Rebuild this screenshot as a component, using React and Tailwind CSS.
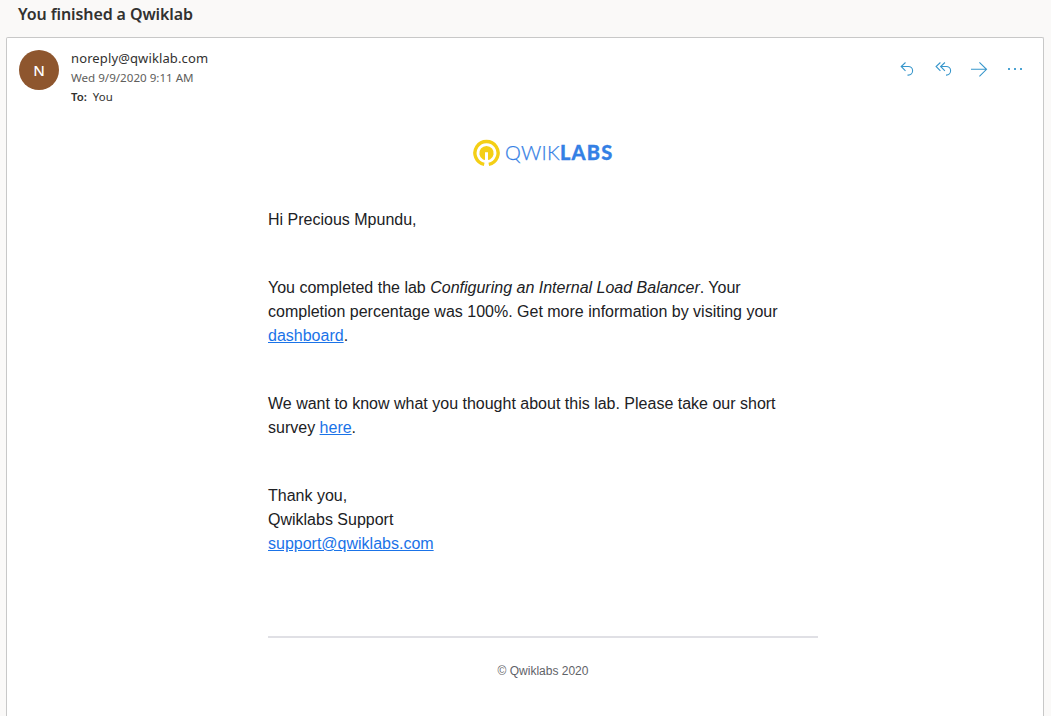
import React from 'react';

function ReplyIcon() {
  return (
    <svg width="16" height="16" viewBox="0 0 16 16" fill="none" stroke="#3796cb" strokeWidth="1.1">
      <path d="M6.5 1.5 2.2 5.5 6.5 9.8M2.2 5.5h7.1a4.3 4.3 0 0 1 0 8.6H8.5" />
    </svg>
  );
}

function ReplyAllIcon() {
  return (
    <svg width="18" height="16" viewBox="0 0 18 16" fill="none" stroke="#3796cb" strokeWidth="1.1">
      <path d="M6.4 1.5 2.1 5.5l4.3 4.3M10.9 1.5 6.6 5.5l4.3 4.3M6.6 5.5h5.7a4.3 4.3 0 0 1 0 8.6H12" />
    </svg>
  );
}

function ForwardIcon() {
  return (
    <svg width="18" height="16" viewBox="0 0 18 16" fill="none" stroke="#3796cb" strokeWidth="1.1">
      <path d="M1 8.3h15.6M9.4 1.3l7.1 7-7.1 7" />
    </svg>
  );
}

function MoreIcon() {
  return (
    <svg width="16" height="16" viewBox="0 0 16 16" fill="#4ba3d3">
      <path d="M1 7h2v2H1zM7 7h2v2H7zM13 7h2v2h-2z" />
    </svg>
  );
}

function Logo() {
  return (
    <div className="flex h-7 w-[142px] items-center">
      <svg className="shrink-0" width="28" height="28" viewBox="0 0 28 28" fill="none">
        <path d="M12.2 25.4A11.6 11.6 0 1 1 16.8 25.4" stroke="#f4cf15" strokeWidth="3.4" />
        <path d="M11 20.4A7.2 7.2 0 1 1 18 20.4L16 21V13.3H13V21Z" fill="#f4cf15" />
      </svg>
      <div className="-mt-[3px] ml-[5px] flex whitespace-nowrap font-['Lato'] text-[20px] leading-7 text-[#3480e5]">
        <span className="font-light tracking-[0.25px] [-webkit-text-stroke:0.25px_#3480e5]">QWIK</span>
        <span className="font-black tracking-[1.2px] [-webkit-text-stroke:0.3px_#3480e5]">LABS</span>
      </div>
    </div>
  );
}

const link = 'text-[#1a73e8] underline';

export default function App() {
  return (
    <div className="flex h-[716px] w-[1051px] flex-col overflow-hidden bg-[#faf9f8] font-['Noto_Sans',sans-serif] text-[#323130]">
      <h1 className="h-[37px] shrink-0 pl-[18px] text-[16px] font-semibold leading-[28px]">
        <span className="tracking-[-0.1px]">You finished a Qwiklab</span>
      </h1>
      <main className="ml-[6px] mr-[7px] flex-1 rounded-t-[2px] border border-b-0 border-[#c8c8c8] bg-white">
        <header className="flex h-[92px] pl-3 pt-3">
          <div className="flex size-10 items-center justify-center rounded-full bg-[#8e562e] pt-px text-[15px] font-medium text-white">
            N
          </div>
          <div className="ml-3 flex-1">
            <div className="h-[18px] text-[13px] leading-[17px] tracking-[0.12px]">
              <span>noreply@qwiklab.com</span>
            </div>
            <div className="h-5 text-[11.6px] leading-5 text-[#605e5c]">
              <span>Wed 9/9/2020 9:11 AM</span>
            </div>
            <div className="flex gap-[6px] text-[11.4px] leading-[18px]">
              <span className="font-semibold">To:</span>
              <span>You</span>
            </div>
          </div>
          <div className="mr-5 flex h-[38px] w-[124px] items-center justify-between">
            <ReplyIcon />
            <ReplyAllIcon />
            <ForwardIcon />
            <MoreIcon />
          </div>
        </header>
        <article className="ml-[261px] flex w-[550px] flex-col font-['Liberation_Sans',sans-serif] text-base leading-6 text-[#202124]">
          <div className="flex justify-center pt-[9px]">
            <Logo />
          </div>
          <p className="mt-[41px]">Hi Precious Mpundu,</p>
          <p className="mt-11">
            You completed the lab <em>Configuring an Internal Load Balancer</em>. Your
            <br />
            completion percentage was 100%. Get more information by visiting your
            <br />
            <a className={link}>dashboard</a>.
          </p>
          <p className="mt-11">
            We want to know what you thought about this lab. Please take our short
            <br />
            survey <a className={link}>here</a>.
          </p>
          <p className="mt-11">
            Thank you,
            <br />
            Qwiklabs Support
            <br />
            <a className={link}>support@qwiklabs.com</a>
          </p>
          <hr className="mt-20 border-0 border-t-2 border-[#e0e0e5]" />
          <footer className="mt-[21px] text-center text-[12px] text-[#5f6368]">© Qwiklabs 2020</footer>
        </article>
      </main>
    </div>
  );
}
